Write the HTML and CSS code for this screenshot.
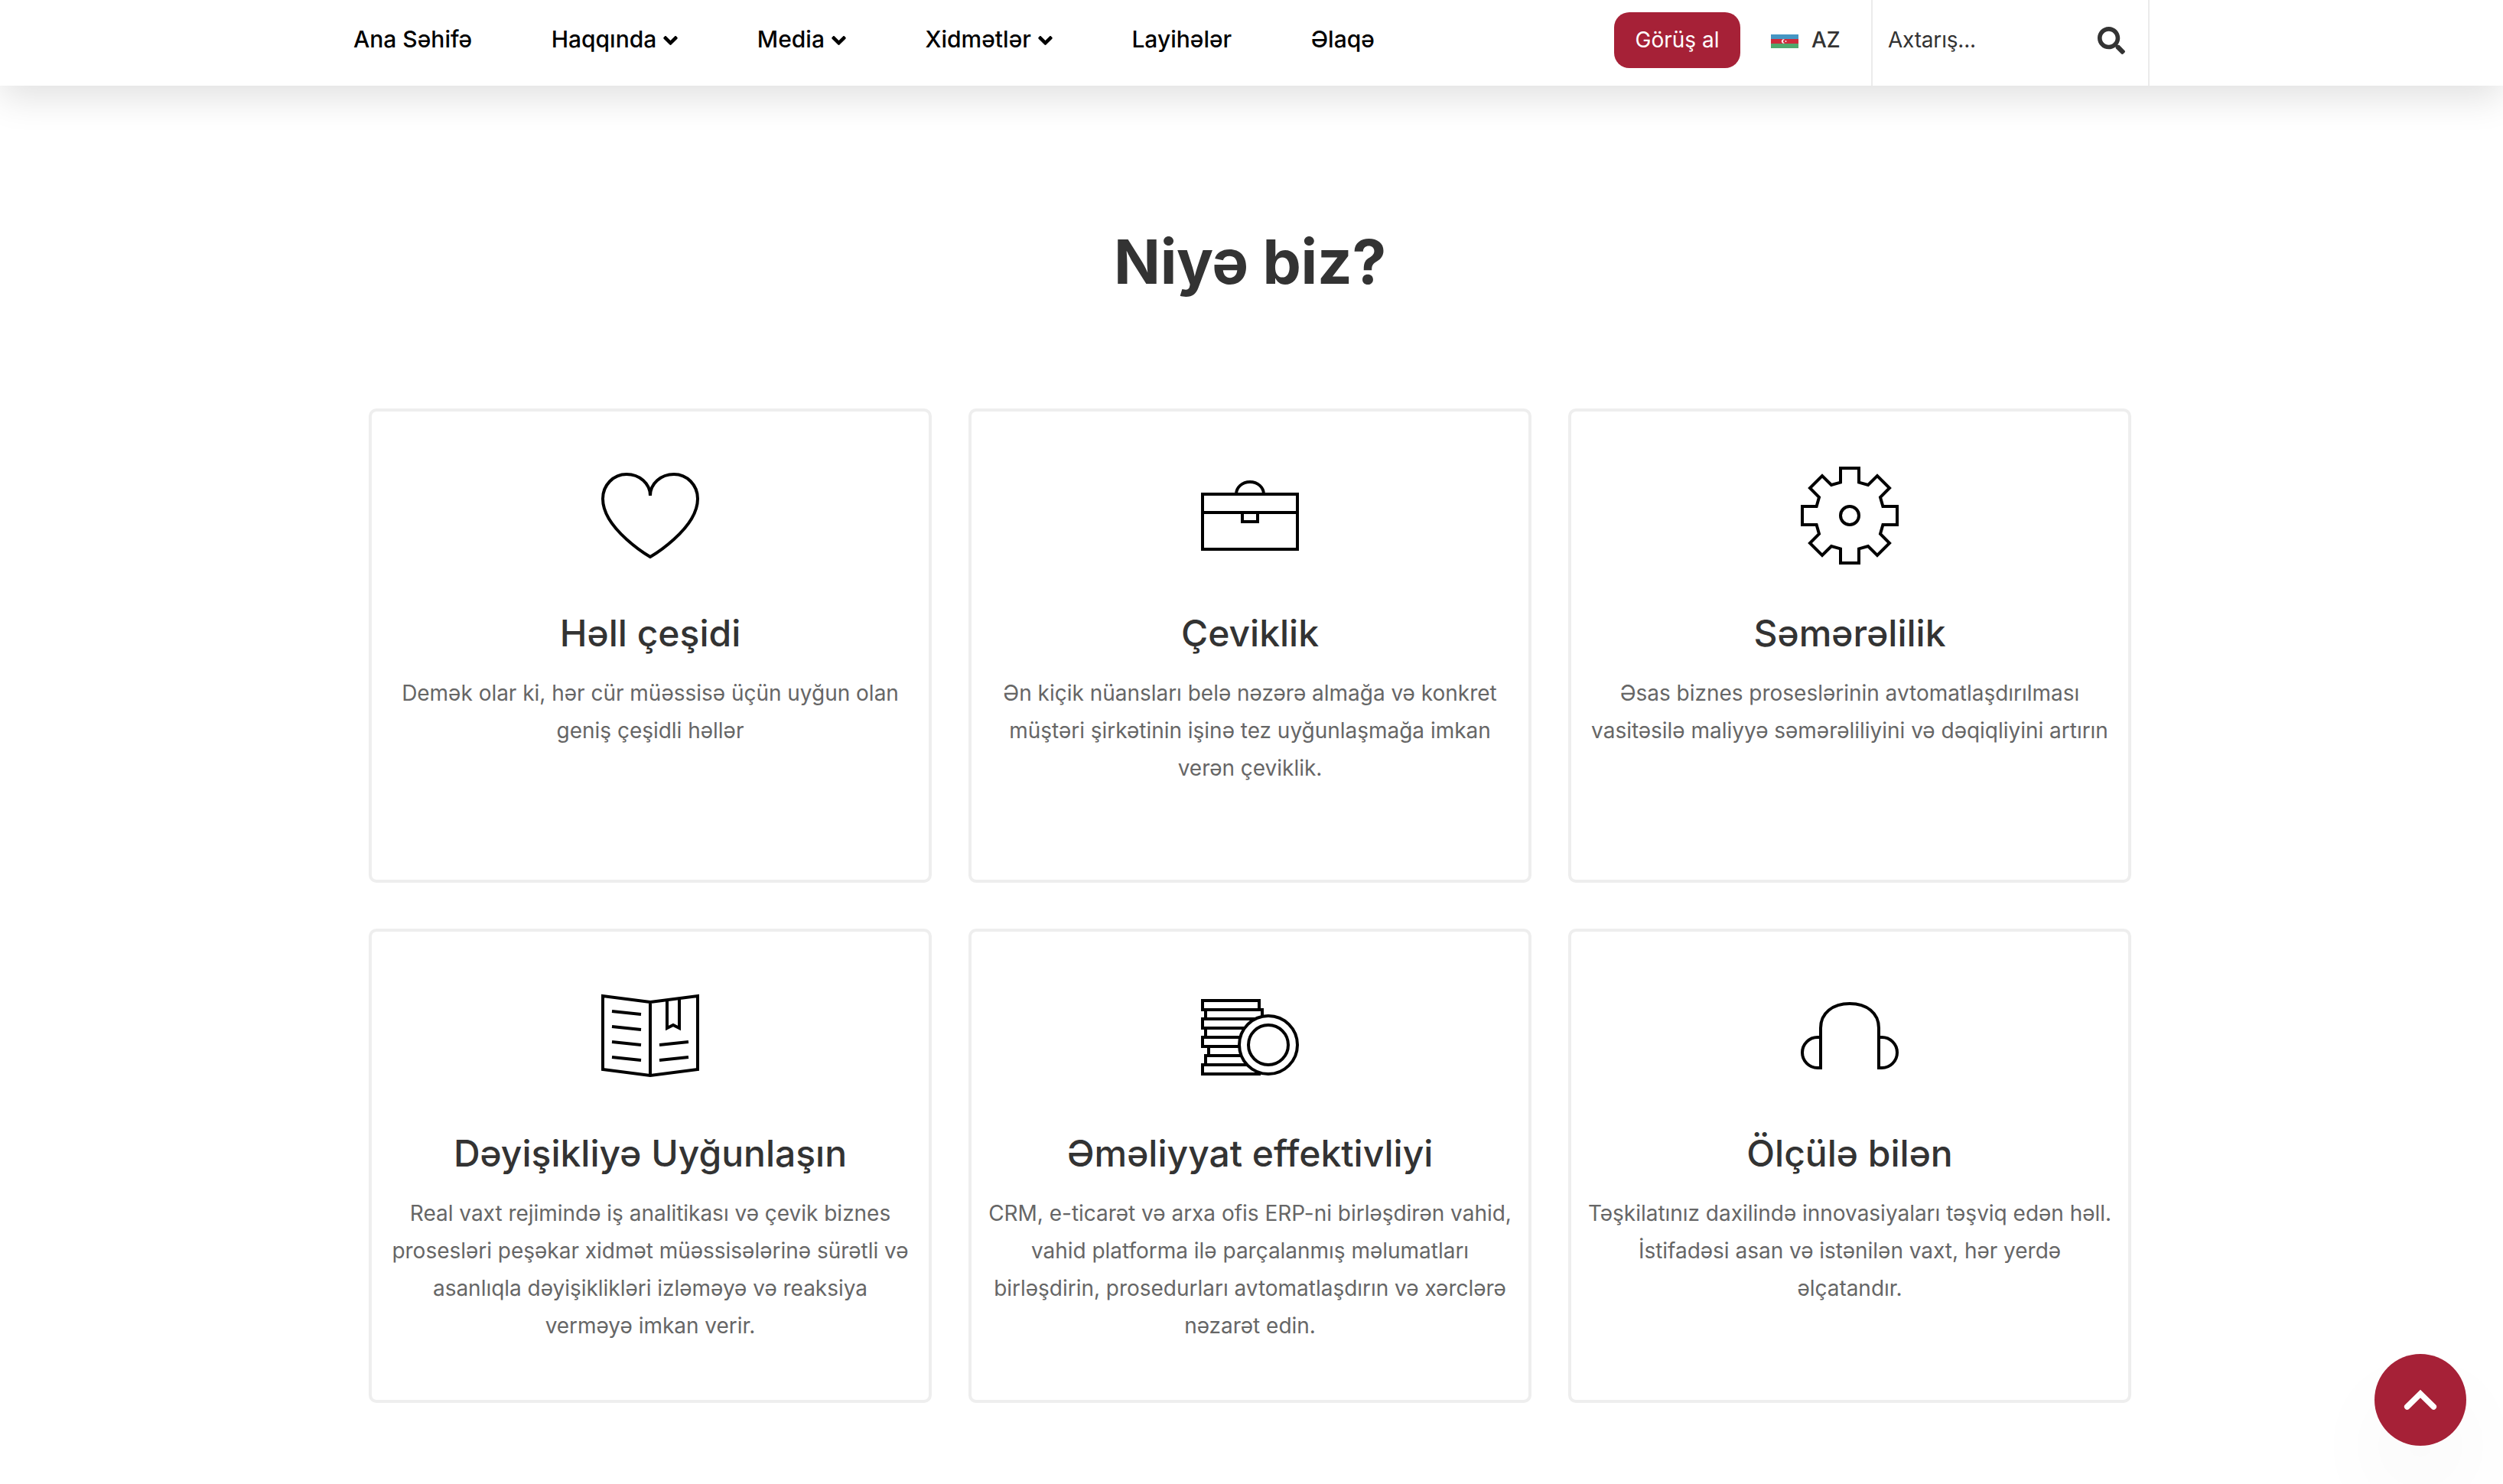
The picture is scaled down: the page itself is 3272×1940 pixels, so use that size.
FILE: index.html
```html
<!DOCTYPE html>
<html lang="az">
<head>
    <meta charset="UTF-8">
    <meta name="viewport" content="width=device-width, initial-scale=1.0">
    <title>Niyə biz?</title>

    <link rel="stylesheet" href="styles.css">
</head>
<body>

    <svg class="sprite" width="0" height="0">
        <symbol id="angle" viewBox="0 152 320 208">
            <path d="M143 352.3L7 216.3c-9.4-9.4-9.4-24.6 0-33.9l22.6-22.6c9.4-9.4 24.6-9.4 33.9 0l96.4 96.4 96.4-96.4c9.4-9.4 24.6-9.4 33.9 0l22.6 22.6c9.4 9.4 9.4 24.6 0 33.9l-136 136c-9.2 9.4-24.4 9.4-33.8 0z"/>
        </symbol>
    </svg>

    <header class="header">
        <nav class="nav">
            <a>Ana Səhifə</a>
            <a>Haqqında <svg class="angle"><use href="#angle"/></svg></a>
            <a>Media <svg class="angle"><use href="#angle"/></svg></a>
            <a>Xidmətlər <svg class="angle"><use href="#angle"/></svg></a>
            <a>Layihələr</a>
            <a>Əlaqə</a>
        </nav>

        <div class="tools">
            <a class="meeting">Görüş al</a>
            <div class="lang">
                <svg class="flag" viewBox="0 0 36 18">
                    <rect width="36" height="6" fill="#4596c3"/>
                    <rect y="6" width="36" height="6" fill="#ce2b3b"/>
                    <rect y="12" width="36" height="6" fill="#50a86c"/>
                    <path d="M18 6.900a2.600 2.600 0 1 0 0 4.200a2.100 2.100 0 1 1 0-4.200z" fill="#fff"/>
                    <circle cx="19.500" cy="9" r="0.900" fill="#fff"/>
                </svg>
                <span>AZ</span>
            </div>
            <div class="search">
                <span>Axtarış...</span>
                <svg class="loupe" viewBox="0 0 512 512">
                    <path d="M505 442.7L405.3 343c-4.5-4.5-10.6-7-17-7H372c27.6-35.3 44-79.7 44-128C416 93.1 322.9 0 208 0S0 93.1 0 208s93.1 208 208 208c48.3 0 92.7-16.4 128-44v16.3c0 6.4 2.5 12.5 7 17l99.7 99.7c9.4 9.4 24.6 9.4 33.9 0l28.3-28.3c9.4-9.4 9.4-24.6.1-34zM208 336c-70.7 0-128-57.2-128-128 0-70.7 57.2-128 128-128 70.7 0 128 57.2 128 128 0 70.7-57.2 128-128 128z"/>
                </svg>
            </div>
        </div>
    </header>

    <main class="why">
        <h2>Niyə biz?</h2>

        <div class="cards">
            <div class="card">
                <svg class="icon" viewBox="0 0 64 64">
                    <path d="M32 19C32 11 25 5 16.500 5S1 12 1 21C1 41 32 59 32 59S63 41 63 21C63 12 56 5 47.500 5S32 11 32 19"/>
                </svg>
                <h3>Həll çeşidi</h3>
                <p>Demək olar ki, hər cür müəssisə üçün uyğun olan geniş çeşidli həllər</p>
            </div>

            <div class="card">
                <svg class="icon" viewBox="0 0 64 64">
                    <rect x="1" y="18" width="62" height="36"/>
                    <path d="M1 30H63M27 30V36H37V30M23 18C23 13.500 27 10 32 10S41 13.500 41 18"/>
                </svg>
                <h3>Çeviklik</h3>
                <p>Ən kiçik nüansları belə nəzərə almağa və konkret müştəri şirkətinin işinə tez uyğunlaşmağa imkan verən çeviklik.</p>
            </div>

            <div class="card">
                <svg class="icon" viewBox="0 0 64 64">
                    <polygon points="26,1 26,10.300 20,12 14,6 6,14 12,20 10.300,26 1,26 1,38 10.300,38 12,44 6,50 14,58 20,52 26,53.700 26,63 38,63 38,53.700 44,52 50,58 58,50 52,44 53.700,38 63,38 63,26 53.700,26 52,20 58,14 50,6 44,12 38,10.300 38,1"/>
                    <circle cx="32" cy="32" r="6"/>
                </svg>
                <h3>Səmərəlilik</h3>
                <p>Əsas biznes proseslərinin avtomatlaşdırılması vasitəsilə maliyyə səmərəliliyini və dəqiqliyini artırın</p>
            </div>

            <div class="card">
                <svg class="icon" viewBox="0 0 64 64">
                    <path d="M32 10L1 6V54L32 58L63 54V6L32 10V58"/>
                    <path d="M7 16L26 18M7 26L26 28M7 36L26 38M7 46L26 48M38 38L57 36M38 48L57 46"/>
                    <path d="M43 9V27L47 25L51 27V8"/>
                </svg>
                <h3>Dəyişikliyə Uyğunlaşın</h3>
                <p>Real vaxt rejimində iş analitikası və çevik biznes prosesləri peşəkar xidmət müəssisələrinə sürətli və asanlıqla dəyişiklikləri izləməyə və reaksiya verməyə imkan verir.</p>
            </div>

            <div class="card">
                <svg class="icon" viewBox="0 0 64 64">
                    <path d="M38 15V9H1V15H40V22M3 15V21H36M1 20V27H36M1 21H36M3 27V33H32M1 32V39H32M1 33H32M5 39V45H32M3 44V51H36M3 45H32M1 50V57H39M1 51H36"/>
                    <circle class="coin" cx="44" cy="38" r="19"/>
                    <circle cx="44" cy="38" r="13"/>
                </svg>
                <h3>Əməliyyat effektivliyi</h3>
                <p>CRM, e-ticarət və arxa ofis ERP-ni birləşdirən vahid, vahid platforma ilə parçalanmış məlumatları birləşdirin, prosedurları avtomatlaşdırın və xərclərə nəzarət edin.</p>
            </div>

            <div class="card">
                <svg class="icon" viewBox="0 0 64 64">
                    <path d="M13 54V27C13 17 21 11 32 11S51 17 51 27V54"/>
                    <path d="M13 33H11C5.500 33 1 37.500 1 43S5.500 53 11 53H13M51 33H53C58.500 33 63 37.500 63 43S58.500 53 53 53H51"/>
                </svg>
                <h3>Ölçülə bilən</h3>
                <p>Təşkilatınız daxilində innovasiyaları təşviq edən həll. İstifadəsi asan və istənilən vaxt, hər yerdə əlçatandır.</p>
            </div>
        </div>
    </main>

    <a class="to_top">
        <svg viewBox="0 0 120 120">
            <path d="M42.700 69L60 52L77.300 69"/>
        </svg>
    </a>

</body>
</html>
```
FILE: styles.css
```css
* {
    box-sizing: border-box;
}

body {
    margin: 0;
    height: 1940px;
    overflow: hidden;
    font-family: Inter, "Liberation Sans", sans-serif;
    font-size: 28px;
    font-optical-sizing: none;
    color: #333;
    background: #fff;
}

.sprite {
    display: block;
}

.header {
    display: flex;
    justify-content: space-between;
    height: 112px;
    padding: 0 462px;
    box-shadow: 0 16px 48px rgba(0, 0, 0, 0.12);
}

.nav {
    display: flex;
    gap: 103.5px;
    height: 102px;
    align-items: center;
    font-size: 30px;
    font-weight: 500;
    color: #000;
    white-space: nowrap;
}

.nav a {
    display: flex;
    align-items: center;
}

.angle {
    width: 19px;
    height: 12px;
    margin: 4px 0 0 9px;
}

.tools {
    display: flex;
}

.meeting {
    width: 165px;
    height: 73px;
    margin-top: 16px;
    line-height: 72px;
    text-align: center;
    color: #fff;
    background: #a62137;
    border-radius: 20px;
}

.lang {
    display: flex;
    align-items: center;
    width: 171px;
    height: 104px;
    padding-left: 40px;
    font-weight: 500;
}

.flag {
    width: 36px;
    height: 18px;
    margin: 4px 17px 0 0;
}

.search {
    display: flex;
    justify-content: space-between;
    width: 364px;
    height: 112px;
    padding: 35px 30px 0 20px;
    border: solid #ebebeb;
    border-width: 0 2px;
}

.search span {
    letter-spacing: -0.2px;
}

.loupe {
    width: 36px;
    height: 36px;
    fill: #333;
}

.why {
    padding: 181px 486px 0 482px;
}

.why h2 {
    margin: 0 0 143px;
    font-size: 80px;
    line-height: 98px;
    font-weight: 700;
    letter-spacing: -0.3px;
    text-align: center;
}

.cards {
    display: grid;
    grid-template-columns: repeat(3, 736px);
    grid-auto-rows: 620px;
    gap: 60px 48px;
}

.card {
    padding: 72px 20px 0;
    text-align: center;
    border: 4px solid #eee;
    border-radius: 10px;
}

.icon {
    display: block;
    width: 128px;
    height: 128px;
    margin: 0 auto 60px;
    fill: none;
    stroke: #000;
    stroke-width: 2;
}

.icon .coin {
    fill: #fff;
}

.card h3 {
    margin: 0 0 24px;
    font-size: 48px;
    line-height: 60px;
    font-weight: 500;
}

.card p {
    margin: 0;
    line-height: 49px;
    letter-spacing: -0.02px;
    color: #666;
}

.to_top {
    position: fixed;
    left: 3104px;
    top: 1770px;
    width: 120px;
    height: 120px;
    border-radius: 50%;
    background: #a62137;
    box-shadow: 0 60px 120px rgba(0, 0, 0, 0.04);
}

.to_top path {
    fill: none;
    stroke: #fff;
    stroke-width: 7.5;
    stroke-linecap: round;
}
```
